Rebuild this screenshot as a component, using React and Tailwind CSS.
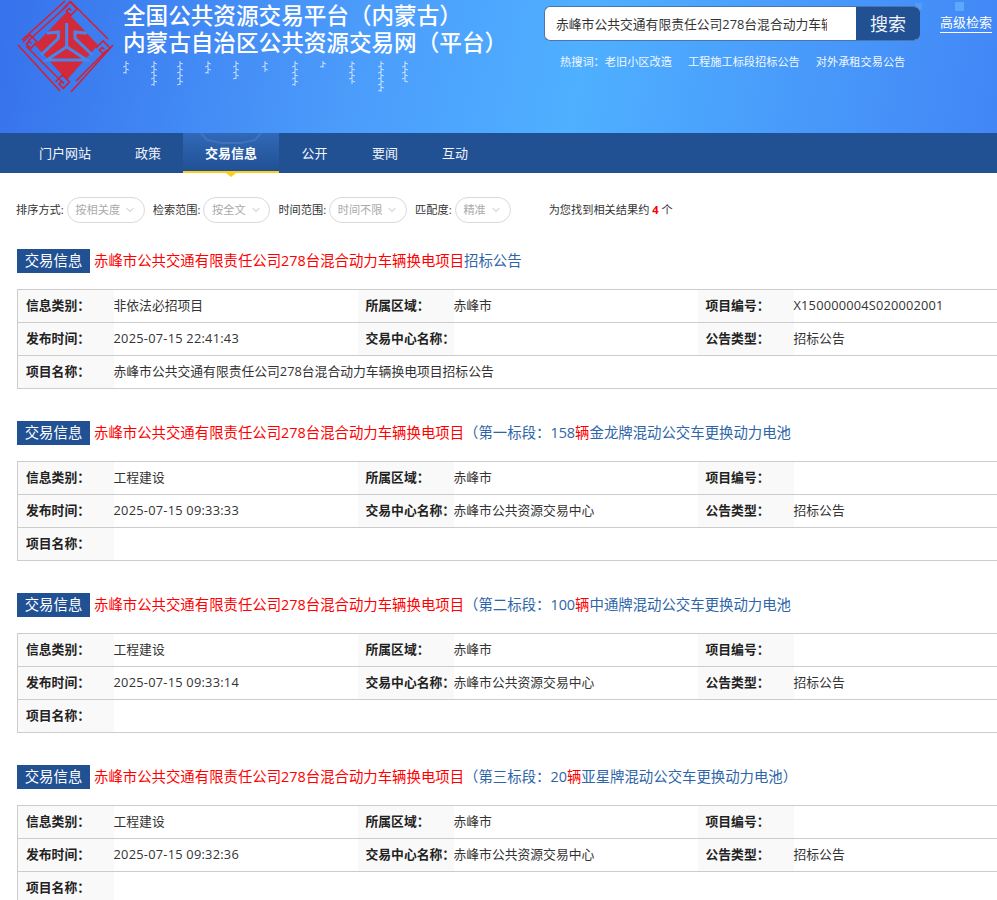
import React from "react";
import { ChevronDown } from "lucide-react";

const font = "font-['Open_Sans','Noto_Sans_CJK_SC',sans-serif]";
const navItems = [
  { name: "门户网站", w: "w-[96px]" },
  { name: "政策", w: "w-[70px]" },
  { name: "交易信息", w: "w-[96px]", active: true },
  { name: "公开", w: "w-[71px]" },
  { name: "要闻", w: "w-[70px]" },
  { name: "互动", w: "w-[70px]" },
];
const filters = [
  { label: "排序方式:", value: "按相关度", w: "w-[78px]" },
  { label: "检索范围:", value: "按全文", w: "w-[67px]" },
  { label: "时间范围:", value: "时间不限", w: "w-[78px]" },
  { label: "匹配度:", value: "精准", w: "w-[56px]" },
];
const base = "赤峰市公共交通有限责任公司278台混合动力车辆换电项目";
const results = [
  {
    before: "招标公告",
    after: "",
    category: "非依法必招项目",
    time: "2025-07-15 22:41:43",
    center: "",
    code: "X150000004S020002001",
    name: base + "招标公告",
  },
  {
    before: "（第一标段：158",
    after: "金龙牌混动公交车更换动力电池",
    category: "工程建设",
    time: "2025-07-15 09:33:33",
    center: "赤峰市公共资源交易中心",
    code: "",
    name: "",
  },
  {
    before: "（第二标段：100",
    after: "中通牌混动公交车更换动力电池",
    category: "工程建设",
    time: "2025-07-15 09:33:14",
    center: "赤峰市公共资源交易中心",
    code: "",
    name: "",
  },
  {
    before: "（第三标段：20",
    after: "亚星牌混动公交车更换动力电池）",
    category: "工程建设",
    time: "2025-07-15 09:32:36",
    center: "赤峰市公共资源交易中心",
    code: "",
    name: "",
  },
];

const spirals = [
  [54, 10],
  [14, 43],
  [87, 49],
  [46.5, 83],
];

const Logo = () => (
  <svg width="100" height="96" viewBox="0 0 100 96" className="shrink-0">
    <polygon points="50.7,12.7 82,46 50.7,81 19,46" fill="#d22a3a" />
    <g fill="none" stroke="#d81e2e" strokeWidth="1.5">
      <path d="M49,2 L6,41 M10,47 L47,84 M2,46 L44,92" />
      <path d="M54,2 L92,40 M97,46 L55,93 M91,51 L60,82 M52,6 L12,42" />
      {spirals.map(([x, y]) => (
        <path
          key={x}
          transform={`translate(${x},${y}) rotate(45)`}
          d="M-5,5 L-5,-5 L5,-5 L5,4 L-1,4 L-1,0 L2,0"
        />
      ))}
    </g>
    <g fill="none" stroke="#4a86ea" strokeWidth="3">
      <path d="M50.7,24 L50.7,47" />
      <path d="M50.7,47.7 L30.7,61 L70.7,61 Z" />
      <path d="M30.7,34.3 L42.3,33 L42.3,39.3 L25,56" />
      <path d="M70.7,34.3 L59,33 L59,39.3 L76.4,56" />
    </g>
  </svg>
);

const scriptColumns = [
  { x: 3, h: 14 },
  { x: 31, h: 26 },
  { x: 57, h: 25 },
  { x: 85, h: 14 },
  { x: 113, h: 19 },
  { x: 142, h: 12 },
  { x: 172, h: 26 },
  { x: 200, h: 8 },
  { x: 229, h: 24 },
  { x: 258, h: 32 },
  { x: 282, h: 22 },
];

const tickPath = (x, h) => {
  let d = `M${x},1 L${x},${h}`;
  for (let y = 3, i = 0; y < h; y += 3, i++) {
    d += ` M${x},${y} l${i % 2 ? -3 : 3},1`;
  }
  return d;
};

// banner ornament, the vertical script in the original is an image
const ScriptStrip = () => (
  <svg width="290" height="34" viewBox="0 0 290 34" className="mt-[4px]">
    {scriptColumns.map((c) => (
      <path key={c.x} d={tickPath(c.x, c.h)} fill="none" stroke="#fff" strokeWidth="0.8" opacity="0.85" />
    ))}
  </svg>
);

const Header = () => (
  <div className="relative h-[133px] bg-[linear-gradient(100deg,#3672ec_0%,#4b9bfb_35%,#4fb0ff_58%,#4286f6_100%)] flex">
    <span className="absolute left-[915px] top-[3px] w-[7px] h-[7px] bg-[#4f9dfb]" />
    <span className="absolute left-[955px] top-[2px] w-[9px] h-[9px] bg-[#5ca8fb]" />
    <div className="w-[123px] pl-[16px] shrink-0 -mt-[1px]">
      <Logo />
    </div>
    <div className="w-[421px] shrink-0 pt-[2px] text-white text-[22.6px] leading-[27px] font-medium whitespace-nowrap">
      <div>全国公共资源交易平台（内蒙古）</div>
      <div>内蒙古自治区公共资源交易网（平台）</div>
      <ScriptStrip />
    </div>
    <div className="relative w-[376px] shrink-0 pt-[6px]">
      <div className="flex h-[35px] rounded-md overflow-hidden border border-[#4d75ad] border-r-0 bg-white">
        <div className="w-[311px] pl-[11px] pr-[29px] shrink-0">
          <div className="text-[12.8px] leading-[34px] text-[#333] overflow-hidden whitespace-nowrap">
            赤峰市公共交通有限责任公司278台混合动力车辆换电项目
          </div>
        </div>
        <button className="flex-1 bg-[#215093] text-[#eef3fa] text-[18px] leading-[35px]">搜索</button>
      </div>
      <div className="flex text-[#f2f8ff] text-[11.2px] leading-[18px] mt-[12px] pl-[16px] gap-[16px] whitespace-nowrap">
        <span>热搜词：老旧小区改造</span>
        <span>工程施工标段招标公告</span>
        <span>对外承租交易公告</span>
      </div>
    </div>
    <a className="ml-[20px] mt-[13px] h-[20px] text-white text-[13px] leading-[19px] border-b border-white whitespace-nowrap">
      高级检索
    </a>
  </div>
);

const Nav = () => (
  <div className="h-[40px] bg-[#215093] flex pl-[17px]">
    {navItems.map((item) => (
      <div
        key={item.name}
        className={
          item.active
            ? `${item.w} relative text-center text-white text-[13px] font-bold leading-[40px] bg-[linear-gradient(180deg,#3169b8,#215093)] border-b-2 border-[#fbcd1e]`
            : `${item.w} text-center text-[#f1f5fb] text-[13px] leading-[40px]`
        }
      >
        {item.active && (
          <svg width="64" height="11" viewBox="0 0 64 11" className="absolute left-[16px] top-0">
            <path d="M2,0 L8,7 L22,10 L42,10 L56,7 L62,0" fill="none" stroke="#4a7cc4" strokeWidth="2" opacity="0.6" />
          </svg>
        )}
        <span className="relative">{item.name}</span>
        {item.active && (
          <span className="absolute left-1/2 -translate-x-1/2 top-[40px] w-0 h-0 border-x-[5px] border-x-transparent border-t-[4px] border-t-[#fbcd1e]" />
        )}
      </div>
    ))}
  </div>
);

const Filters = () => (
  <div className="flex items-center h-[26px] mt-[24px] pl-[16px] text-[11.2px] whitespace-nowrap">
    {filters.map((f) => (
      <div key={f.label} className="flex items-center mr-[8px]">
        <span className="text-[#333]">{f.label}</span>
        <span
          className={`${f.w} h-[26px] flex items-center justify-center gap-[4px] ml-[3px] border border-[#d9d9d9] rounded-[13px] text-[#aaa]`}
        >
          {f.value}
          <ChevronDown size={12} strokeWidth={1.25} className="text-[#999]" />
        </span>
      </div>
    ))}
    <span className="ml-[30px] text-[#333]">
      为您找到相关结果约 <b className="text-[#f00] font-bold">4</b> 个
    </span>
  </div>
);

const Label = ({ children }) => (
  <td className="bg-[#f9f9f9] px-[8px] font-bold text-[#222] whitespace-nowrap">{children}</td>
);
const Value = ({ children, span }) => (
  <td colSpan={span} className="text-[#333] whitespace-nowrap">
    {children}
  </td>
);

const Result = ({ item }) => (
  <div className="mb-[32px]">
    <div className="flex items-center h-[24px] whitespace-nowrap">
      <span className="w-[73px] h-[24px] leading-[24px] text-center bg-[#215093] text-white text-[14.4px] shrink-0">
        交易信息
      </span>
      <span className="ml-[4px] text-[14.4px] text-[#2d65a8]">
        <span className="text-[#f00]">{base}</span>
        {item.before}
        {item.after && <span className="text-[#f00]">辆</span>}
        {item.after}
      </span>
    </div>
    <table className="mt-[16px] w-[1020px] table-fixed border-collapse border border-[#ccc] border-r-0 text-[12.8px] [&_td]:border-y [&_td]:border-[#ccc] [&_td]:h-[33px]">
      <colgroup>
        <col className="w-[96px]" />
        <col className="w-[244px]" />
        <col className="w-[96px]" />
        <col className="w-[244px]" />
        <col className="w-[96px]" />
        <col />
      </colgroup>
      <tbody>
        <tr>
          <Label>信息类别：</Label>
          <Value>{item.category}</Value>
          <Label>所属区域：</Label>
          <Value>赤峰市</Value>
          <Label>项目编号：</Label>
          <Value>
            <span className="tracking-[0.2px]">{item.code}</span>
          </Value>
        </tr>
        <tr>
          <Label>发布时间：</Label>
          <Value>
            <span className="tracking-[0.25px]">{item.time}</span>
          </Value>
          <Label>交易中心名称：</Label>
          <Value>{item.center}</Value>
          <Label>公告类型：</Label>
          <Value>招标公告</Value>
        </tr>
        <tr>
          <Label>项目名称：</Label>
          <Value span={5}>{item.name}</Value>
        </tr>
      </tbody>
    </table>
  </div>
);

export default function App() {
  return (
    <div className={`h-[900px] w-[997px] overflow-hidden bg-white ${font}`}>
      <Header />
      <Nav />
      <Filters />
      <div className="mt-[26px] ml-[17px]">
        {results.map((item) => (
          <Result key={item.before} item={item} />
        ))}
      </div>
    </div>
  );
}
